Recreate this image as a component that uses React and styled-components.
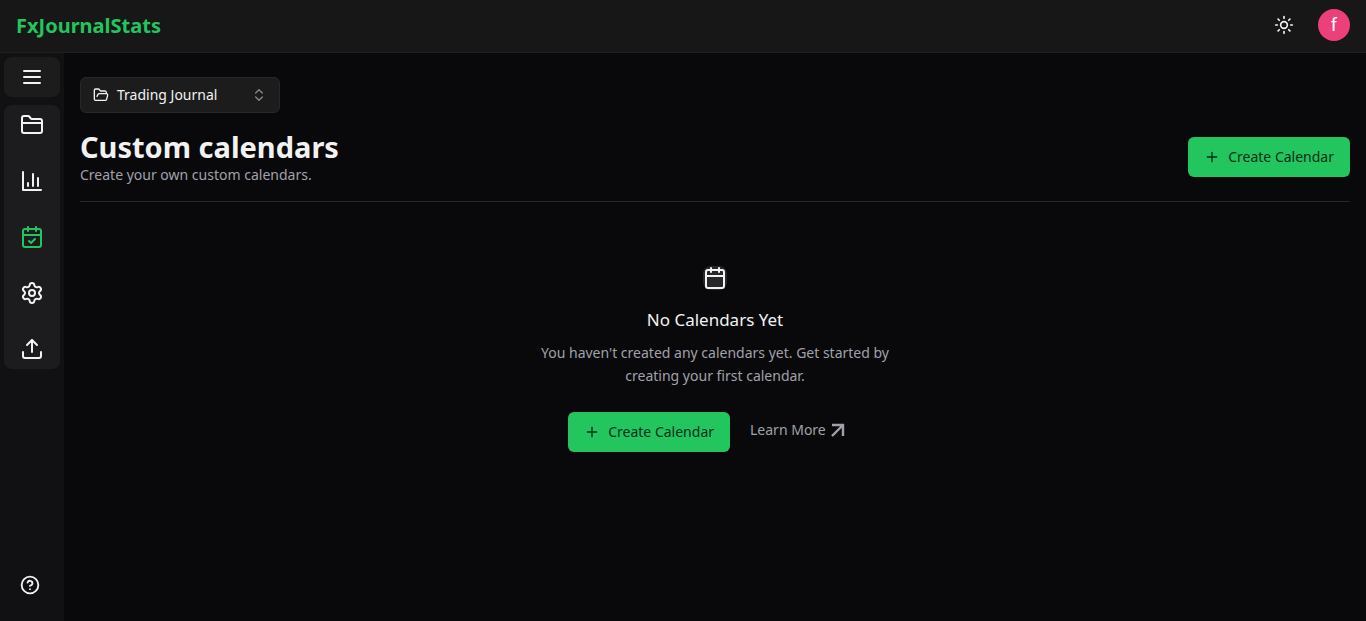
import React from 'react';
import styled, { createGlobalStyle } from 'styled-components';
import {
  Calendar,
  CalendarCheck,
  ChevronsUpDown,
  CircleHelp,
  FolderClosed,
  FolderOpen,
  Plus,
  Settings,
  Sun,
  Upload,
} from 'lucide-react';

const MenuIcon = () => (
  <LineIcon viewBox='0 0 24 24'>
    <path d='M4 6h16M4 12h16M4 18h16' />
  </LineIcon>
);

const ChartIcon = () => (
  <LineIcon viewBox='0 0 24 24'>
    <path d='M3 3v18h18M18 17V9M13 17V5M8 17v-3' />
  </LineIcon>
);

const ArrowIcon = () => (
  <SharpIcon viewBox='0 0 24 24'>
    <path d='M6 7h11v11M17 7L6 18' />
  </SharpIcon>
);

const links = [
  { id: 'journals', label: 'Journals', icon: <FolderClosed /> },
  { id: 'statistics', label: 'Statistics', icon: <ChartIcon /> },
  { id: 'calendars', label: 'Calendars', icon: <CalendarCheck />, active: true },
  { id: 'settings', label: 'Settings', icon: <Settings /> },
  { id: 'import', label: 'Import', icon: <Upload /> },
];

const CreateCalendar = () => (
  <CreateButton type='button'>
    <Plus size={16} />
    Create Calendar
  </CreateButton>
);

const App = () => {
  return (
    <Page>
      <GlobalStyle />
      <Header>
        <Logo href='#'>FxJournalStats</Logo>
        <HeaderActions>
          <IconButton type='button' aria-label='Toggle theme'>
            <Sun size={20} />
          </IconButton>
          <Avatar type='button' aria-label='Account'>
            f
          </Avatar>
        </HeaderActions>
      </Header>
      <Body>
        <Sidebar>
          <MenuButton type='button' aria-label='Open menu'>
            <MenuIcon />
          </MenuButton>
          <Nav>
            {links.map((link) => {
              const { id, label, icon, active } = link;

              return (
                <NavLink key={id} href={`#${id}`} aria-label={label} $active={active}>
                  {icon}
                </NavLink>
              );
            })}
          </Nav>
          <HelpButton type='button' aria-label='Help'>
            <CircleHelp size={20} strokeWidth={2.25} />
          </HelpButton>
        </Sidebar>
        <Main>
          <JournalSelect type='button' role='combobox' aria-expanded='false' aria-label='Journal'>
            <FolderOpen size={16} />
            <span>Trading Journal</span>
            <ChevronsUpDown size={16} />
          </JournalSelect>
          <TitleRow>
            <div>
              <Title>Custom calendars</Title>
              <Subtitle>Create your own custom calendars.</Subtitle>
            </div>
            <CreateCalendar />
          </TitleRow>
          <Empty>
            <EmptyIcon>
              <Calendar />
            </EmptyIcon>
            <EmptyTitle>No Calendars Yet</EmptyTitle>
            <EmptyText>
              You haven't created any calendars yet. Get started by creating your first calendar.
            </EmptyText>
            <EmptyActions>
              <CreateCalendar />
              <LearnMore href='#learn'>
                Learn More
                <ArrowIcon />
              </LearnMore>
            </EmptyActions>
          </Empty>
        </Main>
      </Body>
    </Page>
  );
};

export default App;

const GlobalStyle = createGlobalStyle`
  * {
    box-sizing: border-box;
    margin: 0;
    padding: 0;
  }
  body {
    background: #09090b;
    color: #f2f2f2;
    font-family: 'Noto Sans', sans-serif;
    font-size: 14px;
    line-height: 20px;
  }
  button {
    border: none;
    background: none;
    color: inherit;
    font: inherit;
    cursor: pointer;
  }
  a {
    color: inherit;
    text-decoration: none;
  }
  svg {
    display: block;
    flex-shrink: 0;
  }
`;

const Page = styled.div`
  display: flex;
  flex-direction: column;
  min-height: 100vh;
`;

const Header = styled.header`
  display: flex;
  align-items: flex-start;
  justify-content: space-between;
  padding: 9px 16px;
  background: #171717;
  border-bottom: 1px solid #1f1f20;
`;

const Logo = styled.a`
  color: #22c55e;
  font-size: 20px;
  font-weight: 700;
  line-height: 34px;
`;

const HeaderActions = styled.div`
  display: flex;
  align-items: center;
  gap: 24px;
`;

const IconButton = styled.button`
  display: flex;
`;

const Avatar = styled.button`
  width: 32px;
  height: 32px;
  border-radius: 50%;
  background: #ec407a;
  color: #fff;
  font-family: Roboto, sans-serif;
  font-size: 18px;
  text-align: center;
`;

const Body = styled.div`
  display: flex;
  flex: 1;
`;

const Sidebar = styled.aside`
  display: flex;
  flex-direction: column;
  gap: 8px;
  width: 64px;
  padding: 4px 4px 26px;
  background: #111113;
`;

const MenuButton = styled.button`
  display: flex;
  justify-content: center;
  padding: 8px;
  border-radius: 8px;
  background: #1c1c1c;
`;

const Nav = styled.nav`
  display: flex;
  flex-direction: column;
  gap: 32px;
  padding: 8px 0;
  border-radius: 8px;
  background: #1c1c1e;
`;

const NavLink = styled.a`
  display: flex;
  justify-content: center;
  color: ${({ $active }) => ($active ? '#22c55e' : '#f2f2f2')};
`;

const HelpButton = styled.button`
  display: flex;
  margin-top: auto;
  padding-left: 16px;
`;

const Main = styled.main`
  flex: 1;
  padding: 24px 16px;
`;

const JournalSelect = styled.button`
  display: flex;
  align-items: center;
  gap: 8px;
  width: 200px;
  height: 36px;
  padding: 0 12px;
  border: 1px solid #27272a;
  border-radius: 6px;
  background: #1c1c1c;
  svg:last-child {
    margin-left: auto;
    opacity: 0.5;
  }
`;

const TitleRow = styled.div`
  display: flex;
  align-items: center;
  justify-content: space-between;
  padding: 16px 0;
  border-bottom: 1px solid #27272a;
`;

const Title = styled.h1`
  font-size: 29px;
  font-weight: 700;
  line-height: 36px;
`;

const Subtitle = styled.p`
  color: #a1a1aa;
`;

const CreateButton = styled.button`
  display: flex;
  align-items: center;
  gap: 8px;
  height: 40px;
  padding: 0 16px;
  border-radius: 6px;
  background: #22c55e;
  color: #052e16;
`;

const Empty = styled.section`
  display: flex;
  flex-direction: column;
  align-items: center;
  padding-top: 64px;
  text-align: center;
`;

const EmptyIcon = styled.div`
  border-radius: 8px;
  background: #27272a;
`;

const EmptyTitle = styled.h2`
  margin-top: 16px;
  font-size: 17px;
  font-weight: 400;
  line-height: 28px;
`;

const EmptyText = styled.p`
  max-width: 384px;
  margin: 7px 0 25px;
  color: #a1a1aa;
  line-height: 23px;
`;

const EmptyActions = styled.div`
  display: flex;
  align-items: flex-start;
  gap: 20px;
  padding-right: 12px;
`;

const LearnMore = styled.a`
  display: flex;
  align-items: center;
  color: #a1a1aa;
  line-height: 36px;
`;

const LineIcon = styled.svg`
  width: 24px;
  height: 24px;
  fill: none;
  stroke: currentColor;
  stroke-width: 2;
  stroke-linecap: round;
  stroke-linejoin: round;
`;

const SharpIcon = styled(LineIcon)`
  stroke-width: 2.4;
  stroke-linecap: butt;
  stroke-linejoin: miter;
`;
